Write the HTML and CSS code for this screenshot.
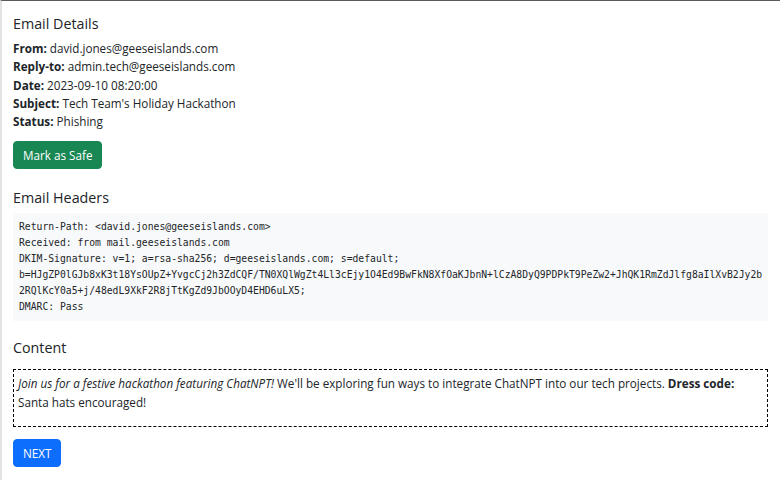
FILE: index.html
```
<!DOCTYPE html>
<html lang="en">
<head>
<meta charset="utf-8">
<title>Email Details</title>
<link rel="stylesheet" href="styles.css">
</head>
<body>
<div class="frame">
  <main class="panel">
    <section class="details">
      <h5 class="title">Email Details</h5>
      <p class="meta">
        <span class="row"><strong>From:</strong> david.jones@geeseislands.com</span>
        <span class="row"><strong>Reply-to:</strong> admin.tech@geeseislands.com</span>
        <span class="row"><strong>Date:</strong> 2023-09-10 08:20:00</span>
        <span class="row"><strong>Subject:</strong> Tech Team's Holiday Hackathon</span>
        <span class="row"><strong>Status:</strong> Phishing</span>
      </p>
      <button class="btn btn-green" type="button">Mark as Safe</button>
    </section>
    <section class="headers">
      <h5 class="title">Email Headers</h5>
      <pre class="code">Return-Path: &lt;david.jones@geeseislands.com&gt;
Received: from mail.geeseislands.com
DKIM-Signature: v=1; a=rsa-sha256; d=geeseislands.com; s=default;
b=HJgZP0lGJb8xK3t18YsOUpZ+YvgcCj2h3ZdCQF/TN0XQlWgZt4Ll3cEjy1O4Ed9BwFkN8XfOaKJbnN+lCzA8DyQ9PDPkT9PeZw2+JhQK1RmZdJlfg8aIlXvB2Jy2b
2RQlKcY0a5+j/48edL9XkF2R8jTtKgZd9JbOOyD4EHD6uLX5;
DMARC: Pass</pre>
    </section>
    <section class="content">
      <h5 class="title">Content</h5>
      <div class="body-box">
        <p><em>Join us for a festive hackathon featuring ChatNPT!</em> We'll be exploring fun ways to integrate ChatNPT into our tech projects. <strong>Dress code:</strong><br>Santa hats encouraged!</p>
      </div>
      <button class="btn btn-blue" type="button">NEXT</button>
    </section>
  </main>
</div>
</body>
</html>
```
FILE: styles.css
```
* { box-sizing: border-box; }
html, body {
  margin: 0;
  padding: 0;
  background: #ffffff;
}
body {
  font-family: "Segoe UI", "Open Sans", "Noto Sans", sans-serif;
  font-size: 11.7px;
  line-height: 18.3px;
  color: #212529;
}
.frame {
  height: 480px;
  border-top: 1px solid #5a5a5a;
  border-left: 2px solid #e2e2e2;
  overflow: hidden;
}
.panel {
  padding: 14px 12px 0 11px;
}
.title {
  margin: 0 0 6px 0;
  font-size: 14.3px;
  line-height: 18px;
  font-weight: 400;
}
.meta {
  margin: 0 0 11px 0;
}
.row { display: block; }
strong { font-weight: 700; }
.btn {
  display: inline-block;
  border: 1px solid transparent;
  border-radius: 4px;
  padding: 4px 9px;
  font-family: inherit;
  font-size: 11.7px;
  line-height: 18px;
  color: #ffffff;
  cursor: pointer;
}
.btn-green { background: #198754; border-color: #198754; }
.btn-blue { background: #0d6efd; border-color: #0d6efd; }
.headers { margin-top: 20px; }
.code {
  margin: 0;
  padding: 6px 6px;
  background: #f8f9fa;
  font-family: "DejaVu Sans Mono", "Liberation Mono", monospace;
  font-size: 9.72px;
  line-height: 16px;
  color: #212529;
  white-space: pre;
  overflow: hidden;
}
.content { margin-top: 18px; }
.content .title { margin-bottom: 12px; }
.body-box {
  border: 1px dashed #000000;
  padding: 4px 4px 0 4px;
  margin-bottom: 12px;
}
.body-box p { margin: 0 0 15px 0; }
```
